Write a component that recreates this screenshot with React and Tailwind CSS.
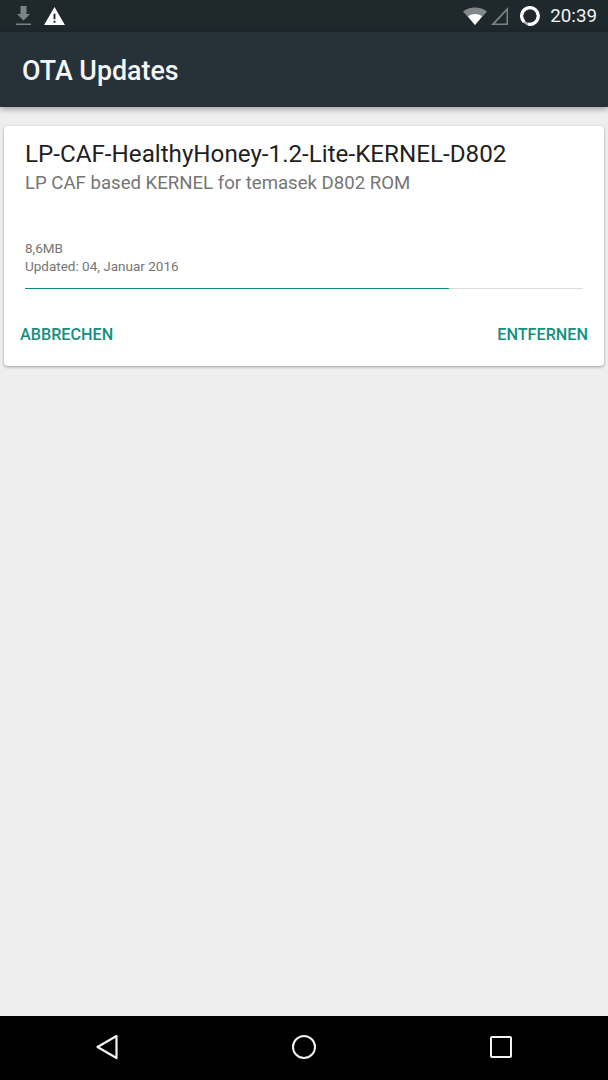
const FONT = "font-['Roboto',sans-serif]";

const DownloadIcon = () => (
  <svg width="15" height="20" viewBox="0 0 15 20" className="text-[#7d8285]">
    <path d="M4.500 0h6v8H14l-6.500 6.500L1 8h3.500z" fill="currentColor" />
    <rect x="0" y="17.500" width="15" height="1.500" fill="currentColor" />
  </svg>
);

const WarningIcon = () => (
  <svg width="21" height="18" viewBox="0 0 22 19">
    <path fillRule="evenodd" fill="#fff" d="M11 0L22 19H0zM10 7v6h2V7zM10 14.500v2h2v-2z" />
  </svg>
);

const StatusRight = () => (
  <div className="flex items-center">
    <svg width="24" height="18" viewBox="0 0 24 18" className="mr-[4px]">
      <path d="M0 4.500C6.500-1 17.500-1 24 4.500L12 18z" fill="#fff" fillOpacity="0.45" />
      <path d="M5 9.500C9 6.300 15 6.300 19 9.500L12 18z" fill="#fff" />
    </svg>
    <svg width="17" height="18" viewBox="0 0 17 18" className="mr-[12px]">
      <path d="M17 0V18H0zM15.500 4L4 16.500H15.500z" fill="#7d8285" fillRule="evenodd" />
    </svg>
    <svg width="20" height="20" viewBox="0 0 20 20" className="mr-[10px]">
      <circle cx="10" cy="10" r="8.300" fill="none" stroke="#b4b7b8" strokeWidth="2.400" />
      <path d="M4.100 15.900A8.300 8.300 0 1 1 8 18.050" fill="none" stroke="#fff" strokeWidth="3.200" />
    </svg>
    <span className="text-[18.800px] leading-none text-[#f2f3f3]">20:39</span>
  </div>
);

const NavBar = () => (
  <div className="h-[64px] bg-black grid grid-cols-3 items-center justify-items-center px-[8px] pb-[2px] shrink-0">
    <svg width="24" height="26" viewBox="0 0 24 26">
      <path d="M21.500 2L2.500 13l19 11z" fill="none" stroke="#f2f2f2" strokeWidth="2.200" strokeLinejoin="round" />
    </svg>
    <div className="w-[24px] h-[24px] rounded-full border-[2.500px] border-[#f2f2f2]" />
    <div className="w-[22px] h-[22px] rounded-[2px] border-[2.500px] border-[#f2f2f2]" />
  </div>
);

export default function App() {
  return (
    <div className={`${FONT} w-[608px] h-[1080px] flex flex-col bg-[#eeeeee] overflow-hidden`}>
      {/* status bar */}
      <div className="h-[32px] bg-[#1e282d] shrink-0 flex items-center justify-between pl-[16px] pr-[11px]">
        <div className="flex items-center gap-[13px]">
          <DownloadIcon />
          <WarningIcon />
        </div>
        <StatusRight />
      </div>

      {/* toolbar */}
      <div className="h-[75px] bg-[#263238] shrink-0 flex items-center pl-[22px] pt-[3px] shadow-[0_2px_6px_rgba(0,0,0,0.35)] relative">
        <h1 className="text-[26.800px] font-medium text-[#f5f6f6] leading-none">OTA Updates</h1>
      </div>

      <div className="flex-1 px-[4px] pt-[19px]">
        <div className="h-[240px] bg-white rounded-[4px] shadow-[0_1px_3px_rgba(0,0,0,0.35)] pt-[14px] flex flex-col">
          <div className="px-[21px]">
            <div className="text-[24.200px] leading-[28px] text-[#1f1f1f]">LP-CAF-HealthyHoney-1.2-Lite-KERNEL-D802</div>
            <div className="text-[18.600px] leading-[24px] mt-[3px] text-[#757575]">LP CAF based KERNEL for temasek D802 ROM</div>
            <div className="text-[13.500px] leading-[18px] mt-[44px] text-[#757575]">8,6MB</div>
            <div className="text-[13.500px] leading-[18px] text-[#757575]">Updated: 04, Januar 2016</div>
            <div className="h-[1px] bg-[#dcdcdc] mt-[13px] relative">
              <div className="absolute left-0 top-0 h-[1px] w-[424px] bg-[#0f8a7e]" />
            </div>
          </div>
          <div className="flex justify-between px-[16px] mt-[36px]">
            <span className="text-[16.200px] leading-[20px] font-medium text-[#148f80]">ABBRECHEN</span>
            <span className="text-[16.200px] leading-[20px] font-medium text-[#148f80]">ENTFERNEN</span>
          </div>
        </div>
      </div>

      <NavBar />
    </div>
  );
}
